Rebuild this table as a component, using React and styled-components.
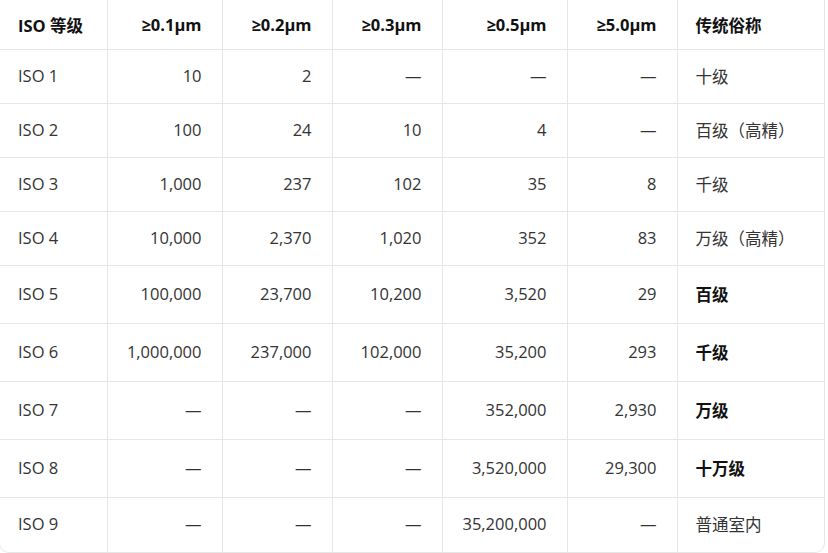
import React from 'react'
import styled, { createGlobalStyle } from 'styled-components'

const GlobalStyle = createGlobalStyle`
  html, body {
    margin: 0;
    padding: 0;
    background: #ffffff;
  }
  body {
    font-family: "Open Sans", "Noto Sans CJK SC", sans-serif;
    overflow: hidden;
  }
`

const columns = [
  { label: 'ISO 等级', width: 107, align: 'left' },
  { label: '≥0.1μm', width: 115, align: 'right' },
  { label: '≥0.2μm', width: 110, align: 'right' },
  { label: '≥0.3μm', width: 110, align: 'right' },
  { label: '≥0.5μm', width: 125, align: 'right' },
  { label: '≥5.0μm', width: 110, align: 'right' },
  { label: '传统俗称', width: 147, align: 'left' },
]

const D = '—'

const rows = [
  { cells: ['ISO 1', '10', '2', D, D, D, '十级'], h: 54 },
  { cells: ['ISO 2', '100', '24', '10', '4', D, '百级（高精）'], h: 54 },
  { cells: ['ISO 3', '1,000', '237', '102', '35', '8', '千级'], h: 54 },
  { cells: ['ISO 4', '10,000', '2,370', '1,020', '352', '83', '万级（高精）'], h: 54 },
  { cells: ['ISO 5', '100,000', '23,700', '10,200', '3,520', '29', '百级'], h: 58, bold: true },
  { cells: ['ISO 6', '1,000,000', '237,000', '102,000', '35,200', '293', '千级'], h: 58, bold: true },
  { cells: ['ISO 7', D, D, D, '352,000', '2,930', '万级'], h: 58, bold: true },
  { cells: ['ISO 8', D, D, D, '3,520,000', '29,300', '十万级'], h: 58, bold: true },
  { cells: ['ISO 9', D, D, D, '35,200,000', D, '普通室内'], h: 54 },
]

const Frame = styled.div`
  width: 824px;
  margin: -1px 0 0 -1px;
  border: 1px solid #e6e6e6;
  border-radius: 0 0 10px 10px;
  overflow: hidden;
`

const Table = styled.table`
  width: 100%;
  table-layout: fixed;
  border-collapse: collapse;
  font-size: 16.5px;
  color: #333333;
`

const HeadCell = styled.th`
  height: 49px;
  padding: 0 20px 0 18px;
  text-align: ${p => p.$align};
  font-weight: 700;
  color: #111111;
  border-right: 1px solid #e6e6e6;
  border-bottom: 1px solid #e6e6e6;
  &:last-child { border-right: none; }
`

const Row = styled.tr`
  height: ${p => p.$h}px;
  &:last-child td { border-bottom: none; }
`

const Cell = styled.td`
  padding: 0 20px 2px 18px;
  text-align: ${p => p.$align};
  white-space: nowrap;
  border-right: 1px solid #e6e6e6;
  border-bottom: 1px solid #e6e6e6;
  &:last-child { border-right: none; }
`

const Strong = styled.strong`
  font-weight: 700;
  color: #111111;
`

export default function App() {
  return (
    <>
      <GlobalStyle />
      <Frame>
        <Table>
          <colgroup>
            {columns.map(c => <col key={c.label} style={{ width: c.width }} />)}
          </colgroup>
          <thead>
            <tr>
              {columns.map(c => (
                <HeadCell key={c.label} $align={c.align}>{c.label}</HeadCell>
              ))}
            </tr>
          </thead>
          <tbody>
            {rows.map(r => (
              <Row key={r.cells[0]} $h={r.h}>
                {r.cells.map((v, i) => (
                  <Cell key={i} $align={columns[i].align}>
                    {r.bold && i === 6 ? <Strong>{v}</Strong> : v}
                  </Cell>
                ))}
              </Row>
            ))}
          </tbody>
        </Table>
      </Frame>
    </>
  )
}
